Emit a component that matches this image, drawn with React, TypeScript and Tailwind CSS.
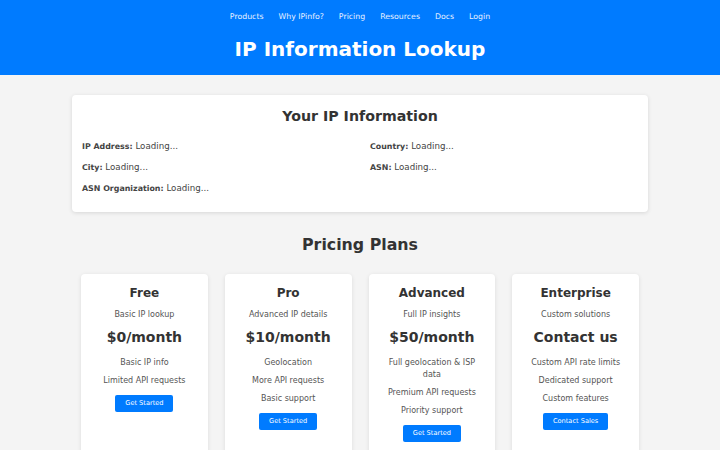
import React from 'react';

interface Plan {
  name: string;
  tagline: string;
  price: string;
  features: string[];
  cta: string;
}

const navLinks = ['Products', 'Why IPinfo?', 'Pricing', 'Resources', 'Docs', 'Login'];

const ipFields = ['IP Address', 'Country', 'City', 'ASN', 'ASN Organization'];

const plans: Plan[] = [
  {
    name: 'Free',
    tagline: 'Basic IP lookup',
    price: '$0/month',
    features: ['Basic IP info', 'Limited API requests'],
    cta: 'Get Started'
  },
  {
    name: 'Pro',
    tagline: 'Advanced IP details',
    price: '$10/month',
    features: ['Geolocation', 'More API requests', 'Basic support'],
    cta: 'Get Started'
  },
  {
    name: 'Advanced',
    tagline: 'Full IP insights',
    price: '$50/month',
    features: ['Full geolocation & ISP data', 'Premium API requests', 'Priority support'],
    cta: 'Get Started'
  },
  {
    name: 'Enterprise',
    tagline: 'Custom solutions',
    price: 'Contact us',
    features: ['Custom API rate limits', 'Dedicated support', 'Custom features'],
    cta: 'Contact Sales'
  }
];

const PlanCard: React.FC<{ plan: Plan }> = ({ plan }) => (
  <div className="bg-white rounded-[4px] shadow-[0_1px_4px_rgba(0,0,0,0.1)] px-[12px] pt-[12px] pb-[16px] text-center">
    <h3 className="text-[12px] leading-[14px] font-bold text-[#333]">{plan.name}</h3>
    <p className="mt-[8.5px] text-[8px] leading-[12px] text-[#555]">{plan.tagline}</p>
    <p className="mt-[8.5px] text-[14px] leading-[17px] font-bold text-[#333]">{plan.price}</p>
    <ul className="mt-[10.5px] flex flex-col gap-[6px] text-[8px] leading-[12px] text-[#555]">
      {plan.features.map((f) => (
        <li key={f}>{f}</li>
      ))}
    </ul>
    <button className="mt-[8.5px] h-[17px] px-[10px] rounded-[2px] bg-[#007bff] text-white text-[6.6px] leading-[17px]">
      {plan.cta}
    </button>
  </div>
);

export default function App() {
  return (
    <div className="min-h-screen bg-[#f4f4f4] font-['DejaVu_Sans',sans-serif] text-[#333]">
      {/* Top bar */}
      <header className="bg-[#007bff] text-white text-center pt-[11px] pb-[14px]">
        <nav className="flex justify-center gap-[15px] text-[7.8px] leading-[12px] text-[#e8f1ff]">
          {navLinks.map((l) => (
            <a key={l} href="#">{l}</a>
          ))}
        </nav>
        <h1 className="mt-[14px] text-[20px] leading-[24px] font-bold">IP Information Lookup</h1>
      </header>

      {/* Visitor IP details */}
      <section className="mt-[20px] mx-auto w-[576px] bg-white rounded-[4px] shadow-[0_1px_4px_rgba(0,0,0,0.12)] px-[10px] pt-[13px] pb-[18px]">
        <h2 className="text-center text-[14.2px] leading-[17px] font-bold text-[#333]">Your IP Information</h2>
        <div className="mt-[15px] grid grid-cols-2 gap-x-[20px] gap-y-[9px] text-[8.7px] text-[#444]">
          {ipFields.map((f) => (
            <p key={f} className="h-[12px] leading-[12px]">
              <strong className="text-[7.9px] leading-none text-[#444]">{f}:</strong> Loading...
            </p>
          ))}
        </div>
      </section>

      {/* Plans */}
      <h2 className="mt-[23px] text-center text-[15.8px] leading-[19px] font-bold text-[#333]">Pricing Plans</h2>
      <div className="mt-[20px] mx-auto w-[558px] grid grid-cols-4 gap-[17px]">
        {plans.map((p) => (
          <PlanCard key={p.name} plan={p} />
        ))}
      </div>
    </div>
  );
}
